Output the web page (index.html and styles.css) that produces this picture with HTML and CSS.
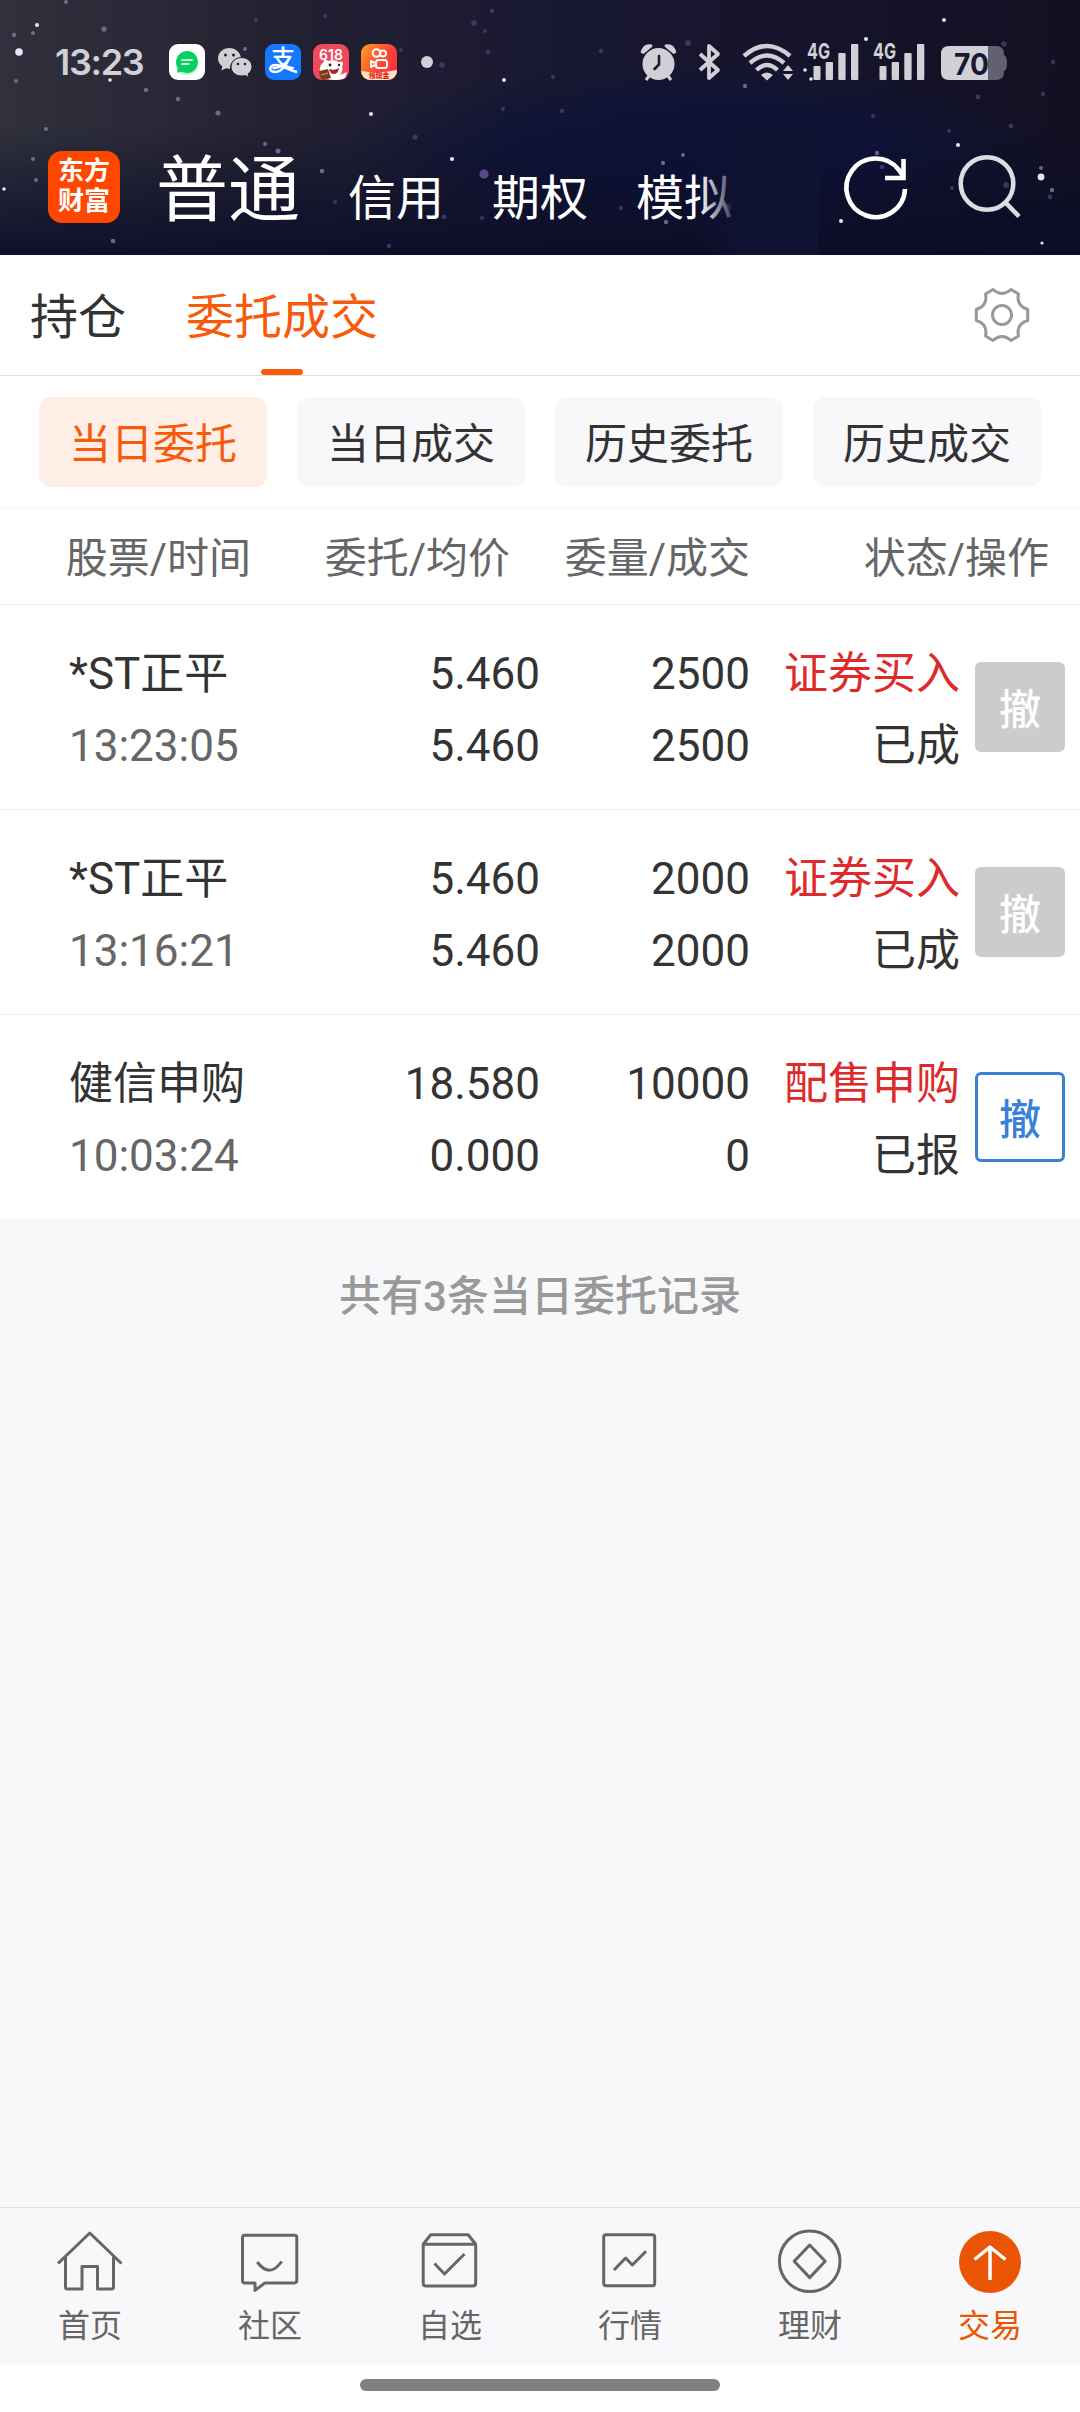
FILE: index.html
```html
<!DOCTYPE html>
<html lang="zh-CN">

<head>
  <meta charset="UTF-8">
  <meta name="viewport" content="width=device-width, initial-scale=1.0">
  <title>委托成交</title>
  <link rel="stylesheet" href="styles.css">
</head>

<body>
  <header class="header">
    <svg class="sky" width="1080" height="255" viewBox="0 0 1080 255">
      <defs>
        <linearGradient id="base" x1="0" y1="0" x2="1" y2="0">
          <stop offset="0" stop-color="#30313c" />
          <stop offset=".25" stop-color="#232233" />
          <stop offset=".5" stop-color="#191831" />
          <stop offset=".75" stop-color="#15142b" />
          <stop offset="1" stop-color="#121022" />
        </linearGradient>
        <linearGradient id="shade" x1="0" y1="0" x2="0" y2="1">
          <stop offset=".5" stop-color="#090b28" stop-opacity="0" />
          <stop offset="1" stop-color="#090b28" stop-opacity=".85" />
        </linearGradient>
        <radialGradient id="blue">
          <stop offset="0" stop-color="#0d1238" />
          <stop offset=".5" stop-color="#0d1238" stop-opacity=".8" />
          <stop offset="1" stop-color="#0d1238" stop-opacity="0" />
        </radialGradient>
      </defs>
      <rect width="1080" height="255" fill="url(#base)" />
      <ellipse cx="700" cy="150" rx="360" ry="85" fill="url(#blue)" />
      <rect width="1080" height="255" fill="url(#shade)" />
      <g fill="#e6e6fa">
        <circle cx="19" cy="52" r="3.800" />
        <circle cx="37" cy="25" r="2" />
        <circle cx="110" cy="80" r="1.800" />
        <circle cx="4" cy="189" r="1.800" />
        <circle cx="371" cy="114" r="2" />
        <circle cx="504" cy="80" r="2" />
        <circle cx="452" cy="159" r="2" />
        <circle cx="944" cy="20" r="2" />
        <circle cx="866" cy="39" r="2" />
        <circle cx="805" cy="70" r="1.800" />
        <circle cx="811" cy="79" r="1.800" />
        <circle cx="958" cy="145" r="2" />
        <circle cx="841" cy="221" r="2" />
        <circle cx="1041" cy="177" r="3.400" />
        <circle cx="1042" cy="243" r="1.600" />
      </g>
      <g fill="#8582ae" fill-opacity=".75">
        <circle cx="14" cy="35" r="2.200" />
        <circle cx="66" cy="2" r="2" />
        <circle cx="104" cy="29" r="2.600" />
        <circle cx="33" cy="33" r="2" />
        <circle cx="16" cy="81" r="2" />
        <circle cx="146" cy="90" r="2.200" />
        <circle cx="178" cy="99" r="2.200" />
        <circle cx="218" cy="113" r="2.500" />
        <circle cx="46" cy="129" r="2" />
        <circle cx="33" cy="159" r="2" />
        <circle cx="36" cy="180" r="2" />
        <circle cx="113" cy="241" r="2.300" />
        <circle cx="265" cy="144" r="2" />
        <circle cx="278" cy="151" r="2.500" />
        <circle cx="322" cy="171" r="2.300" />
        <circle cx="245" cy="49" r="2" />
        <circle cx="877" cy="153" r="2.200" />
        <circle cx="666" cy="222" r="2.200" />
        <circle cx="728" cy="207" r="3.400" />
        <circle cx="745" cy="86" r="2.200" />
        <circle cx="683" cy="155" r="2" />
        <circle cx="663" cy="163" r="2.200" />
        <circle cx="1052" cy="190" r="2.200" />
        <circle cx="1041" cy="168" r="2" />
      </g>
      <g fill="#4a4580" fill-opacity=".7">
        <circle cx="256" cy="20" r="2" />
        <circle cx="325" cy="16" r="2" />
        <circle cx="401" cy="50" r="2" />
        <circle cx="442" cy="65" r="2.800" />
        <circle cx="474" cy="23" r="2.800" />
        <circle cx="492" cy="11" r="2.200" />
        <circle cx="485" cy="31" r="2" />
        <circle cx="488" cy="52" r="2.200" />
        <circle cx="503" cy="109" r="2" />
        <circle cx="415" cy="137" r="2.600" />
        <circle cx="484" cy="174" r="4.600" fill="#7d62ac" />
        <circle cx="335" cy="202" r="2" />
        <circle cx="444" cy="217" r="2.400" />
        <circle cx="482" cy="218" r="2" />
        <circle cx="601" cy="51" r="2.200" />
        <circle cx="688" cy="43" r="3" />
        <circle cx="553" cy="77" r="2" />
        <circle cx="562" cy="111" r="2.200" />
        <circle cx="873" cy="116" r="2" />
        <circle cx="978" cy="97" r="2.400" />
        <circle cx="1011" cy="126" r="2.400" />
        <circle cx="949" cy="131" r="2" />
        <circle cx="1004" cy="44" r="2.600" />
        <circle cx="1053" cy="62" r="2.200" />
        <circle cx="1043" cy="94" r="2.200" />
        <circle cx="1006" cy="185" r="3" />
        <circle cx="952" cy="188" r="2" />
        <circle cx="1050" cy="197" r="2.400" />
        <circle cx="621" cy="208" r="2" />
        <circle cx="882" cy="167" r="2.200" />
        <circle cx="389" cy="246" r="2.200" />
      </g>
    </svg>

    <div class="status_bar">
      <span class="clock">13:23</span>
      <div class="apps">
        <svg width="36" height="36" viewBox="0 0 36 36">
          <rect width="36" height="36" rx="9" fill="#fff" />
          <circle cx="18" cy="20" r="11" fill="#b9f3cd" />
          <path d="M18 7a11 11 0 1 1-5 20.800l-5 1 .800-5A11 11 0 0 1 18 7z" fill="#06d160" />
          <path d="M13 16h10M13 20h6.500" stroke="#c9f9dc" stroke-width="1.800" stroke-linecap="round" />
        </svg>
        <svg width="36" height="36" viewBox="0 0 36 36" fill="#d0d0d6">
          <path d="M12.500 4C6 4 1 8.500 1 14.500c0 3.300 1.800 6 4.300 8L4.500 26.500l4.500-2.200c1.300.3 2.500.5 4 .4A11 10 0 0 1 24 14C23.500 8.500 18.500 4 12.500 4z" />
          <path d="M24.500 13.500C18.800 13.500 14 17.500 14 22.800s4.800 9.200 10.500 9.200c1.200 0 2.400-.2 3.500-.5l4 2-1-3.500c2.300-1.700 4-4.200 4-7.200 0-5.300-4.800-9.300-10.500-9.300z" stroke="#22212f" />
          <g fill="#22212f">
            <circle cx="8.500" cy="11" r="1.500" />
            <circle cx="16.500" cy="11" r="1.500" />
            <circle cx="21" cy="20" r="1.300" />
            <circle cx="28" cy="20" r="1.300" />
          </g>
        </svg>
        <span class="app_icon pay">支
          <svg width="36" height="36" viewBox="0 0 36 36" fill="none" stroke="#fff">
            <path d="M24 14c-2 7-8 14-14 14-7 0-6-7 1-7 6 0 12 5 21 7" stroke-width="2.400" />
          </svg>
        </span>
        <svg width="36" height="36" viewBox="0 0 36 36">
          <rect width="36" height="36" rx="9" fill="#f0485c" />
          <path d="M7 32c-1-7 0-12 4-14-1-3 1-4 4-1 4-1 8-1 11 1 4-1 5 1 3 4 1 3 0 7-2 9l7-3-2 6c-6 3-17 3-25-2z" fill="#fff" />
          <circle cx="17" cy="21" r="1.400" fill="#222" />
          <circle cx="26" cy="21" r="1.200" fill="#222" />
          <path d="M16 25q6 2 10-1-1 6-5 6t-5-5z" fill="#b3232c" />
          <path d="M6 27l9-2 3 9-8 2q-4-2-4-9z" fill="#70401d" />
          <path d="M8 31l7-2" stroke="#d8a158" />
          <text x="18" y="15.500" class="sale">618</text>
        </svg>
        <svg width="36" height="36" viewBox="0 0 36 36">
          <defs>
            <linearGradient id="kuai" x1="0" y1="0" x2="1" y2=".6">
              <stop offset="0" stop-color="#ffa31f" />
              <stop offset=".6" stop-color="#ff4a35" />
              <stop offset="1" stop-color="#fb2f3c" />
            </linearGradient>
          </defs>
          <rect width="36" height="36" rx="9" fill="url(#kuai)" />
          <path d="M0 27q18 3 36-1v1a9 9 0 0 1-9 9H9a9 9 0 0 1-9-9z" fill="#ffe2c4" />
          <g fill="none" stroke="#fff" stroke-width="2">
            <circle cx="15.500" cy="9" r="3.800" />
            <circle cx="22" cy="9.500" r="3" />
            <rect x="15" y="16" width="11" height="8" rx="2.500" />
            <path d="M14 19l-4-2v6l4-2" stroke-linejoin="round" />
          </g>
          <text x="18" y="34" class="cash">领现金</text>
        </svg>
        <span class="more_dot"></span>
      </div>

      <svg class="system" width="370" height="56" viewBox="638 34 370 56" fill="#d0d0d6">
        <!-- alarm -->
        <circle cx="658.500" cy="64" r="16" />
        <path d="M652 44.500q-9-2-11.500 8l3 1.500 9-7.500zM665 44.500q9-2 11.500 8l-3 1.500-9-7.500z" />
        <path d="M649 76l-3 4M668 76l3 4" stroke="#d0d0d6" stroke-width="3" />
        <path d="M659 56v8.500l-4.500 4.500" fill="none" stroke="#191930" stroke-width="2.600" stroke-linecap="round" />
        <!-- bluetooth -->
        <path d="M700 54l18 16-9 8V46l9 8-18 16" fill="none" stroke="#d0d0d6" stroke-width="3.800" stroke-linejoin="round" />
        <!-- wifi -->
        <g fill="none" stroke="#d0d0d6" stroke-width="4.400">
          <path d="M744 56q23-20 46 0" />
          <path d="M750 63q17-15 34 0" />
          <path d="M756.500 70q10.500-10 21 0" />
        </g>
        <path d="M761 75q6-5 12 0l-6 5.500z" />
        <path d="M783 71l5-6 5 6zM783 74h10l-5 6z" />
        <!-- signal -->
        <g id="signal">
          <text x="807" y="59" class="net" textLength="23" lengthAdjust="spacingAndGlyphs">4G</text>
          <rect x="813.500" y="66" width="7" height="14" rx="1" />
          <rect x="825.700" y="62" width="7.300" height="18" rx="1" />
          <rect x="838.300" y="53" width="7.300" height="27" rx="1" />
          <rect x="851" y="44" width="7.300" height="36" rx="1" />
        </g>
        <use href="#signal" x="66" />
        <!-- battery -->
        <path d="M988 46h8q8 0 8 8v1q3 1 3 8t-3 8v1q0 8-8 8h-8z" fill="#62616d" />
        <path d="M988 46h-39q-8 0-8 8v18q0 8 8 8h39z" />
        <text x="971.500" y="74.500" class="charge" textLength="35" lengthAdjust="spacingAndGlyphs">70</text>
      </svg>
    </div>

    <div class="account_bar">
      <div class="logo">东方<br>财富</div>
      <nav class="accounts">
        <span class="main">普通</span>
        <span>信用</span>
        <span>期权</span>
        <span>模拟</span>
        <div class="fade"></div>
      </nav>
      <svg class="tools" width="182" height="72" viewBox="840 151 182 72" fill="none" stroke-width="4.600">
        <path d="M905 189a29.300 29.300 0 1 1-6-19l4 6" stroke="#fff" />
        <path d="M903.500 159v19h-18.500" stroke="#fff" />
        <circle cx="987" cy="183.500" r="26.300" stroke="#dcdce3" />
        <path d="M1005.500 202.500l13.500 14" stroke="#dcdce3" />
      </svg>
    </div>
  </header>

  <div class="tabs">
    <div class="tab">持仓</div>
    <div class="tab active">委托成交</div>
    <svg class="gear" width="60" height="60" viewBox="-30 -30 60 60" fill="none" stroke="#999" stroke-width="3">
      <circle r="9.500" />
      <path d="M-9-25.500Q0-17.500 9-25.500L16.500-21Q14-9 25.700-5.500V5.500Q14 9 16.500 21L9 25.500Q0 17.500-9 25.500L-16.500 21Q-14 9-25.700 5.500V-5.500Q-14-9-16.500-21Z" stroke-linejoin="round" />
    </svg>
  </div>

  <div class="filters">
    <div class="filter active">当日委托</div>
    <div class="filter">当日成交</div>
    <div class="filter">历史委托</div>
    <div class="filter">历史成交</div>
  </div>

  <div class="list_head">
    <div>股票/时间</div>
    <div>委托/均价</div>
    <div>委量/成交</div>
    <div>状态/操作</div>
  </div>

  <div class="list">
    <div class="order">
      <div class="name">*ST正平<br><span>13:23:05</span></div>
      <div class="num">5.460<br>5.460</div>
      <div class="num">2500<br>2500</div>
      <div class="state"><span>证券买入</span><br>已成</div>
      <button type="button" class="cancel" disabled>撤</button>
    </div>
    <div class="order">
      <div class="name">*ST正平<br><span>13:16:21</span></div>
      <div class="num">5.460<br>5.460</div>
      <div class="num">2000<br>2000</div>
      <div class="state"><span>证券买入</span><br>已成</div>
      <button type="button" class="cancel" disabled>撤</button>
    </div>
    <div class="order">
      <div class="name">健信申购<br><span>10:03:24</span></div>
      <div class="num">18.580<br>0.000</div>
      <div class="num">10000<br>0</div>
      <div class="state"><span>配售申购</span><br>已报</div>
      <button type="button" class="cancel">撤</button>
    </div>
  </div>

  <div class="summary">共有3条当日委托记录</div>

  <nav class="bottom_nav">
    <div class="item">
      <svg width="72" height="72" viewBox="0 0 72 72">
        <path d="M4 38.500L35.800 8 67.500 38.500" />
        <path d="M11.500 32v30q0 2 2 2H28V41.500h15.500V64h14q2 0 2-2V32" />
      </svg>
      首页
    </div>
    <div class="item">
      <svg width="72" height="72" viewBox="0 0 72 72">
        <path d="M11 10.300h49.500q2.300 0 2.300 2.300v43q0 2.300-2.300 2.300H31l-10 7.500V58H11q-2.500 0-2.500-2.300v-43q0-2.400 2.500-2.400z" />
        <path d="M23.200 37q12.500 16.500 24.500-.500" />
      </svg>
      社区
    </div>
    <div class="item">
      <svg width="72" height="72" viewBox="0 0 72 72">
        <path d="M9.200 19.200l7.500-9.500h37.500l7.500 9.500V58q0 3-3 3H12q-2.800 0-2.800-3zM9.200 19.200h52.500" />
        <path d="M20.500 38.500l10 10.500 20-20" />
      </svg>
      自选
    </div>
    <div class="item">
      <svg width="72" height="72" viewBox="0 0 72 72">
        <rect x="9.700" y="9.800" width="51" height="51" rx="2.500" />
        <path d="M20 45l11.700-12 6.600 7L52 26.300" />
      </svg>
      行情
    </div>
    <div class="item">
      <svg width="72" height="72" viewBox="0 0 72 72">
        <circle cx="35.700" cy="36.300" r="30.300" />
        <path d="M35.700 20l15.500 16.300-15.500 16.300-15.500-16.300z" />
      </svg>
      理财
    </div>
    <div class="item active">
      <svg width="72" height="72" viewBox="0 0 72 72">
        <circle cx="36" cy="37" r="31" />
        <path d="M36 55V22M20.500 34.500L36 22l15.500 12.500" />
      </svg>
      交易
    </div>
  </nav>

  <div class="gesture_bar"><span></span></div>
</body>

</html>
```
FILE: styles.css
```css
* {
  box-sizing: border-box;
  margin: 0;
  padding: 0;
}

body {
  height: 2412px;

  display: flex;
  flex-direction: column;

  font-family: Roboto, "Noto Sans CJK SC", sans-serif;
  color: #333;
  background-color: #f7f8fa;
}

svg {
  display: block;
}

.header {
  height: 255px;
  padding-top: 42px;

  position: relative;
}

.sky {
  position: absolute;
  top: 0;
  left: 0;
  z-index: -1;
}

.status_bar {
  height: 40px;
  padding: 0 72px 0 55px;

  display: flex;
  align-items: center;
}

.clock {
  width: 114px;

  font-family: Inter, sans-serif;
  font-size: 36px;
  font-weight: 600;
  letter-spacing: -1.3px;
  color: #d0d0d6;
}

.apps {
  display: flex;
  align-items: center;
  gap: 12px;
}

.app_icon {
  width: 36px;
  height: 36px;

  position: relative;

  border-radius: 9px;
  font-size: 24px;
  font-weight: 500;
  line-height: 31px;
  text-align: center;
}

.pay {
  color: white;
  background-color: #1677ff;
}

.pay svg {
  position: absolute;
  top: 0;
  left: 0;
}

.sale {
  font-family: Inter, sans-serif;
  font-size: 14px;
  font-weight: 600;
  text-anchor: middle;
  fill: white;
}

.cash {
  font-size: 7px;
  font-weight: 900;
  text-anchor: middle;
  fill: #dd2c1c;
}

.more_dot {
  width: 12px;
  height: 12px;
  margin-left: 12px;

  border-radius: 50%;
  background-color: #d0d0d6;
}

.system {
  margin-left: auto;
}

.net {
  font-family: Inter, sans-serif;
  font-size: 22px;
  font-weight: 700;
}

.charge {
  font-family: Inter, sans-serif;
  font-size: 30px;
  font-weight: 700;
  text-anchor: middle;
  fill: #191930;
}

.account_bar {
  height: 173px;
  padding: 0 58px 0 48px;

  display: flex;
  align-items: flex-start;
}

.logo {
  width: 72px;
  height: 72px;
  margin-top: 69px;
  padding-top: 5px;

  border-radius: 14px;
  font-size: 26px;
  font-weight: 700;
  line-height: 30px;
  text-align: center;
  color: white;
  background-color: #ff4700;
}

.accounts {
  height: 100%;
  margin-left: 36px;
  padding-top: 45px;

  display: flex;
  align-items: baseline;
  gap: 48px;

  position: relative;

  font-size: 48px;
  line-height: 128px;
  color: white;
}

.accounts .main {
  font-size: 72px;
}

/* hides the end of the scrolling account list */
.fade {
  width: 120px;
  height: 135px;

  position: absolute;
  top: 38px;
  left: 543px;

  background: linear-gradient(to right, rgba(16, 18, 51, 0), #101233 35%);
}

.tools {
  margin-top: 69px;
  margin-left: auto;
}

.tabs {
  height: 121px;
  padding: 0 48px 0 30px;

  display: flex;
  align-items: center;
  gap: 60px;

  font-size: 48px;
  background-color: white;
  border-bottom: 1px solid #ddd;
}

.tab {
  height: 120px;
  line-height: 125px;

  position: relative;
}

.tab.active {
  color: #f65b0b;
}

.tab.active::after {
  content: "";
  width: 42px;
  height: 6px;

  position: absolute;
  left: 75px;
  bottom: 0;

  border-radius: 3px;
  background-color: #f85c0a;
}

.gear {
  margin-left: auto;
}

.filters {
  height: 132px;
  padding: 21px 39px 0;

  display: flex;
  gap: 30px;

  background-color: white;
  border-bottom: 1px solid #f6f6f6;
}

.filter {
  width: 228px;
  height: 90px;

  border-radius: 12px;
  font-size: 42px;
  line-height: 95px;
  text-align: center;
  background-color: #f8f8fb;
}

.filter.active {
  color: #f65b0b;
  background-color: #ffeee6;
}

.list_head {
  height: 97px;
  padding-right: 31px;

  display: grid;
  grid-template-columns: 251px 259px 240px 1fr;

  font-size: 42px;
  line-height: 102px;
  text-align: right;
  color: #666;
  background-color: white;
  border-bottom: 1px solid #eee;
}

.list {
  background-color: white;
}

.order {
  height: 205px;
  padding: 0 15px 0 69px;

  display: grid;
  grid-template-columns: 231px 240px 210px 210px 90px;
  align-items: center;

  font-size: 44px;
  line-height: 72px;
  border-bottom: 1px solid #eee;
}

.order:last-child {
  border-bottom-color: #f7f8fa;
}

.order > div {
  padding-top: 5px;
}

.name span {
  color: #666;
}

.num {
  text-align: right;
}

.state {
  text-align: right;
}

.state span {
  color: #dd2b2b;
}

.cancel {
  width: 90px;
  height: 90px;

  margin-left: 15px;
  padding-bottom: 2px;
  border: 3px solid #3a7fd0;
  border-radius: 6px;

  font-family: inherit;
  font-size: 42px;
  font-weight: 500;
  color: #3a7fd8;
  background-color: white;
}

.cancel:disabled {
  border-color: #ccc;
  color: white;
  background-color: #ccc;
}

.summary {
  flex: 1;
  padding-top: 46px;

  font-size: 42px;
  font-weight: 500;
  line-height: 62px;
  text-align: center;
  color: #999;
}

.bottom_nav {
  height: 157px;
  padding-top: 17px;

  display: grid;
  grid-template-columns: repeat(6, 1fr);

  background-color: #f8f8fb;
  border-top: 1px solid #e2e2e4;
}

.item {
  display: flex;
  flex-direction: column;
  align-items: center;

  font-size: 32px;
  line-height: 58px;
  color: #666;
}

.item svg {
  fill: none;
  stroke: #666;
  stroke-width: 3;
  stroke-linejoin: round;
}

.item.active {
  color: #e95504;
}

.item.active circle {
  fill: #e95504;
  stroke: none;
}

.item.active path {
  stroke: white;
  stroke-width: 3.5;
}

.gesture_bar {
  height: 48px;
  padding-top: 15px;

  background-color: white;
}

.gesture_bar span {
  width: 360px;
  height: 12px;
  margin: 0 auto;

  display: block;

  border-radius: 6px;
  background-color: #808080;
}
```
